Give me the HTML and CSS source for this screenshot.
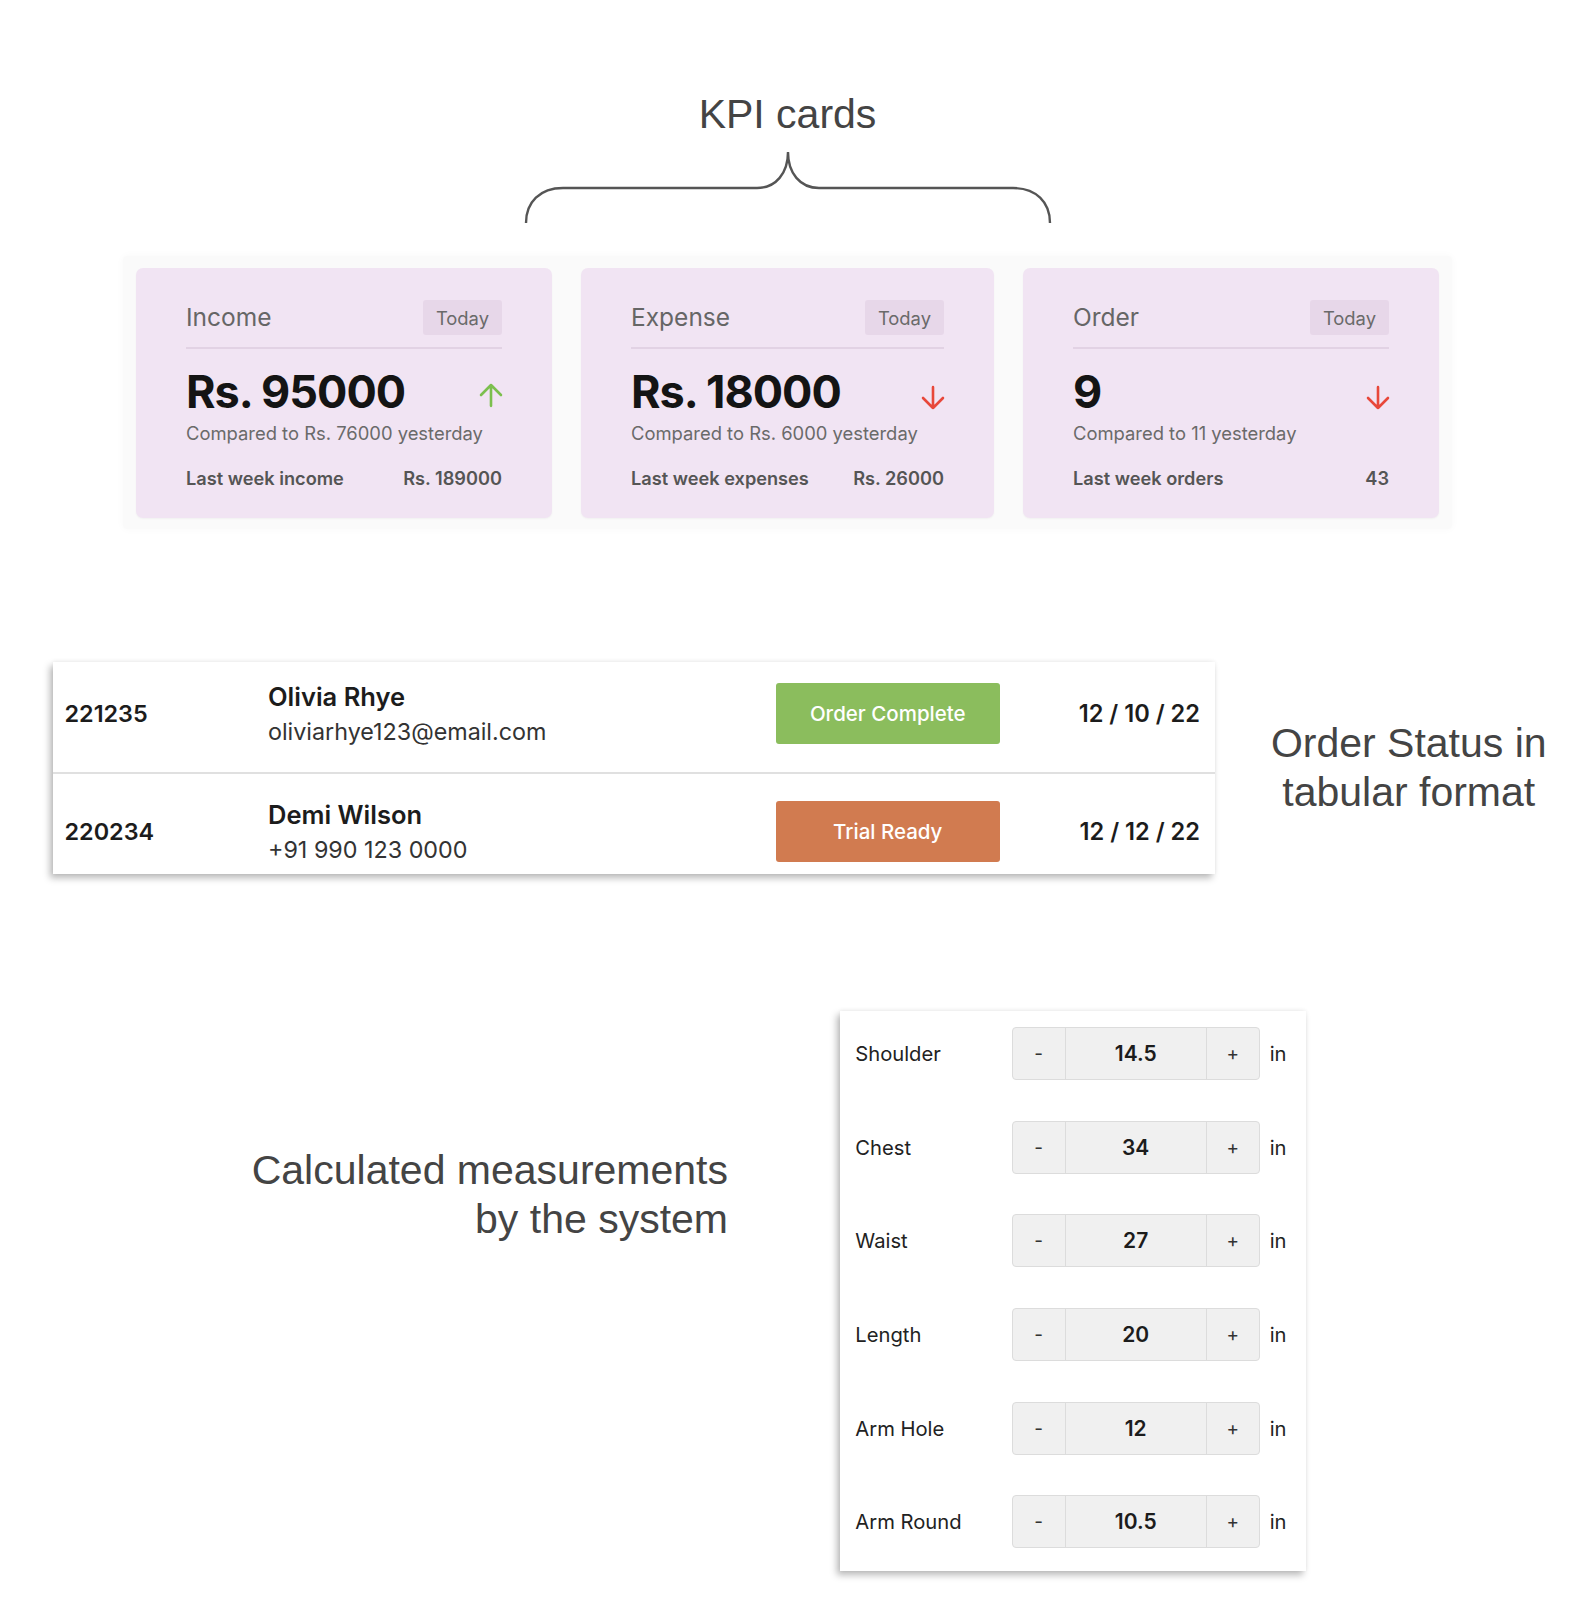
FILE: index.html
```html
<!DOCTYPE html>
<html lang="en">
<head>
<meta charset="utf-8">
<title>Tailoring dashboard components</title>
<link rel="stylesheet" href="styles.css">
</head>
<body>
<div class="page">

  <section class="kpi-section">
    <h2 class="note kpi-title">KPI cards</h2>
    <svg class="brace" width="528" height="73" viewBox="0 0 528 73" aria-hidden="true">
      <path d="M2 72 C2 51 16 37 39 37 H233 C252 37 264 22 264 1 C264 22 276 37 295 37 H489 C512 37 526 51 526 72" fill="none" stroke="#555" stroke-width="2.4"/>
    </svg>
    <div class="kpi-panel">
      <div class="kpi-card">
        <div class="kpi-head"><span class="kpi-name">Income</span><span class="kpi-badge">Today</span></div>
        <div class="kpi-value-row">
          <span class="kpi-value">Rs. 95000</span>
          <svg class="arrow up" width="26" height="26" viewBox="0 0 24 24"><path d="M12 22 V2.8 M2.8 12 L12 2.8 L21.2 12" fill="none" stroke="#7cbf4e" stroke-width="2.4" stroke-linecap="round" stroke-linejoin="round"/></svg>
        </div>
        <p class="kpi-compare">Compared to Rs. 76000 yesterday</p>
        <div class="kpi-foot"><span>Last week income</span><span>Rs. 189000</span></div>
      </div>
      <div class="kpi-card mid">
        <div class="kpi-head"><span class="kpi-name">Expense</span><span class="kpi-badge">Today</span></div>
        <div class="kpi-value-row">
          <span class="kpi-value">Rs. 18000</span>
          <svg class="arrow down" width="26" height="26" viewBox="0 0 24 24"><path d="M12 2 V21.2 M2.8 12 L12 21.2 L21.2 12" fill="none" stroke="#e8473a" stroke-width="2.4" stroke-linecap="round" stroke-linejoin="round"/></svg>
        </div>
        <p class="kpi-compare">Compared to Rs. 6000 yesterday</p>
        <div class="kpi-foot"><span>Last week expenses</span><span>Rs. 26000</span></div>
      </div>
      <div class="kpi-card">
        <div class="kpi-head"><span class="kpi-name">Order</span><span class="kpi-badge">Today</span></div>
        <div class="kpi-value-row">
          <span class="kpi-value">9</span>
          <svg class="arrow down" width="26" height="26" viewBox="0 0 24 24"><path d="M12 2 V21.2 M2.8 12 L12 21.2 L21.2 12" fill="none" stroke="#e8473a" stroke-width="2.4" stroke-linecap="round" stroke-linejoin="round"/></svg>
        </div>
        <p class="kpi-compare">Compared to 11 yesterday</p>
        <div class="kpi-foot"><span>Last week orders</span><span>43</span></div>
      </div>
    </div>
  </section>

  <section class="orders-section">
    <div class="orders-table">
      <div class="order-row first">
        <span class="order-id">221235</span>
        <div class="order-customer"><span class="cust-name">Olivia Rhye</span><span class="cust-contact">oliviarhye123@email.com</span></div>
        <span class="status complete">Order Complete</span>
        <span class="order-date">12 / 10 / 22</span>
      </div>
      <div class="order-row second">
        <span class="order-id">220234</span>
        <div class="order-customer"><span class="cust-name">Demi Wilson</span><span class="cust-contact">+91 990 123 0000</span></div>
        <span class="status trial">Trial Ready</span>
        <span class="order-date">12 / 12 / 22</span>
      </div>
    </div>
    <p class="note orders-note">Order Status in<br>tabular format</p>
  </section>

  <section class="measure-section">
    <p class="note measure-note">Calculated measurements<br>by the system</p>
    <div class="measure-panel">
      <div class="m-row"><span class="m-label">Shoulder</span><div class="stepper"><span class="st-btn">-</span><span class="st-val">14.5</span><span class="st-btn">+</span></div><span class="m-unit">in</span></div>
      <div class="m-row"><span class="m-label">Chest</span><div class="stepper"><span class="st-btn">-</span><span class="st-val">34</span><span class="st-btn">+</span></div><span class="m-unit">in</span></div>
      <div class="m-row"><span class="m-label">Waist</span><div class="stepper"><span class="st-btn">-</span><span class="st-val">27</span><span class="st-btn">+</span></div><span class="m-unit">in</span></div>
      <div class="m-row"><span class="m-label">Length</span><div class="stepper"><span class="st-btn">-</span><span class="st-val">20</span><span class="st-btn">+</span></div><span class="m-unit">in</span></div>
      <div class="m-row"><span class="m-label">Arm Hole</span><div class="stepper"><span class="st-btn">-</span><span class="st-val">12</span><span class="st-btn">+</span></div><span class="m-unit">in</span></div>
      <div class="m-row"><span class="m-label">Arm Round</span><div class="stepper"><span class="st-btn">-</span><span class="st-val">10.5</span><span class="st-btn">+</span></div><span class="m-unit">in</span></div>
    </div>
  </section>

</div>
</body>
</html>
```

FILE: styles.css
```css
* { box-sizing: border-box; }

html, body {
  margin: 0;
  padding: 0;
  background: #ffffff;
}

body {
  font-family: Inter, "Noto Sans", "Liberation Sans", sans-serif;
  color: #1a1a1a;
}

.page {
  width: 1582px;
  min-height: 1606px;
}

.note {
  font-family: "Liberation Sans", Arial, Helvetica, sans-serif;
  font-weight: 400;
  font-size: 41px;
  line-height: 49px;
  color: #444444;
  margin: 0;
}

/* ---------- KPI ---------- */
.kpi-section {
  padding-top: 90px;
  margin-left: 123px;
  width: 1329px;
  display: flex;
  flex-direction: column;
  align-items: center;
}

.kpi-title {
  text-align: center;
}

.brace {
  display: block;
  margin-top: 12px;
}

.kpi-panel {
  margin-top: 32px;
  align-self: stretch;
  display: flex;
  justify-content: space-between;
  padding: 12px 13px 11px;
  background: #fafafa;
  border-radius: 4px;
  box-shadow: 0 0 8px rgba(0, 0, 0, 0.03);
}

.kpi-card {
  width: 416px;
  height: 250px;
  background: #f1e4f3;
  border-radius: 7px;
  padding: 32px 50px 26px;
  box-shadow: 0 1px 2px rgba(0, 0, 0, 0.04);
}

.kpi-card.mid {
  width: 413px;
}

.kpi-head {
  display: flex;
  justify-content: space-between;
  align-items: center;
  height: 35px;
  border-bottom: 2px solid #e2d2e4;
  box-sizing: content-box;
  padding-bottom: 12px;
}

.kpi-name {
  font-size: 24.5px;
  color: #666666;
  line-height: 30px;
  margin-top: -2px;
}

.kpi-badge {
  height: 35px;
  padding: 0 13px;
  display: flex;
  align-items: center;
  background: #e7d7e9;
  border-radius: 3px;
  font-size: 18.4px;
  color: #6a6a6a;
}

.kpi-value-row {
  margin-top: 16px;
  height: 53px;
  display: flex;
  justify-content: space-between;
  align-items: center;
}

.kpi-value {
  font-size: 45px;
  font-weight: 700;
  line-height: 53px;
  letter-spacing: -1px;
  color: #141414;
}

.arrow {
  display: block;
  margin-right: -2px;
}

.arrow.up { margin-top: 6px; }
.arrow.down { margin-top: 12px; }

.kpi-compare {
  margin: 3px 0 0;
  font-size: 18.4px;
  line-height: 25px;
  color: #6a6a6a;
}

.kpi-foot {
  margin-top: 20px;
  display: flex;
  justify-content: space-between;
  font-size: 18.2px;
  line-height: 25px;
  font-weight: 600;
  color: #555555;
}

/* ---------- Orders ---------- */
.orders-section {
  margin-top: 133px;
  display: flex;
  align-items: center;
}

.orders-table {
  margin-left: 53px;
  width: 1162px;
  background: #ffffff;
  box-shadow: -3px 4px 7px rgba(0, 0, 0, 0.28), 0 -1px 4px rgba(0, 0, 0, 0.05);
}

.order-row {
  display: grid;
  grid-template-columns: 203.5px 508px 223.5px 200.5px;
  align-items: center;
  padding: 16.5px 15.5px 23px 11.5px;
}

.order-row.first {
  border-bottom: 2px solid #e0e0e0;
}

.order-row.second {
  padding-top: 23px;
  padding-bottom: 7.5px;
}

.order-id {
  font-size: 23.4px;
  font-weight: 600;
  color: #1c1c1c;
}

.order-customer {
  display: flex;
  flex-direction: column;
}

.cust-name {
  font-size: 25.5px;
  font-weight: 600;
  line-height: 35px;
  color: #1c1c1c;
}

.cust-contact {
  font-size: 23.3px;
  line-height: 35px;
  color: #333333;
}

.status {
  height: 61.5px;
  border-radius: 3px;
  display: flex;
  align-items: center;
  justify-content: center;
  font-size: 20.5px;
  font-weight: 500;
  color: #ffffff;
}

.status.complete { background: #8bbd5d; }
.status.trial { background: #d17b50; }

.order-date {
  text-align: right;
  font-size: 23.6px;
  font-weight: 600;
  color: #1c1c1c;
}

.orders-note {
  width: 352px;
  margin-left: 20.5px;
  text-align: center;
}

/* ---------- Measurements ---------- */
.measure-section {
  margin-top: 137px;
  display: flex;
  align-items: flex-start;
}

.measure-note {
  width: 728px;
  margin-top: 135px;
  text-align: right;
}

.measure-panel {
  margin-left: 112px;
  width: 466px;
  background: #ffffff;
  padding: 16.3px 0 22.7px 15.3px;
  display: flex;
  flex-direction: column;
  gap: 40.6px;
  box-shadow: -3px 4px 7px rgba(0, 0, 0, 0.28), 0 -1px 4px rgba(0, 0, 0, 0.05);
}

.m-row {
  display: flex;
  align-items: center;
  height: 53px;
}

.m-label {
  width: 156.4px;
  font-size: 20.2px;
  color: #222222;
}

.stepper {
  width: 248px;
  height: 53px;
  display: flex;
  background: #f0f0f0;
  border: 1px solid #dcdcdc;
  border-radius: 4px;
}

.st-btn {
  width: 52px;
  display: flex;
  align-items: center;
  justify-content: center;
  font-size: 19px;
  color: #333333;
}

.st-val {
  flex: 1;
  display: flex;
  align-items: center;
  justify-content: center;
  border-left: 1px solid #dcdcdc;
  border-right: 1px solid #dcdcdc;
  font-size: 21px;
  font-weight: 600;
  color: #1c1c1c;
}

.m-unit {
  margin-left: 10px;
  font-size: 20.2px;
  color: #222222;
}
```
